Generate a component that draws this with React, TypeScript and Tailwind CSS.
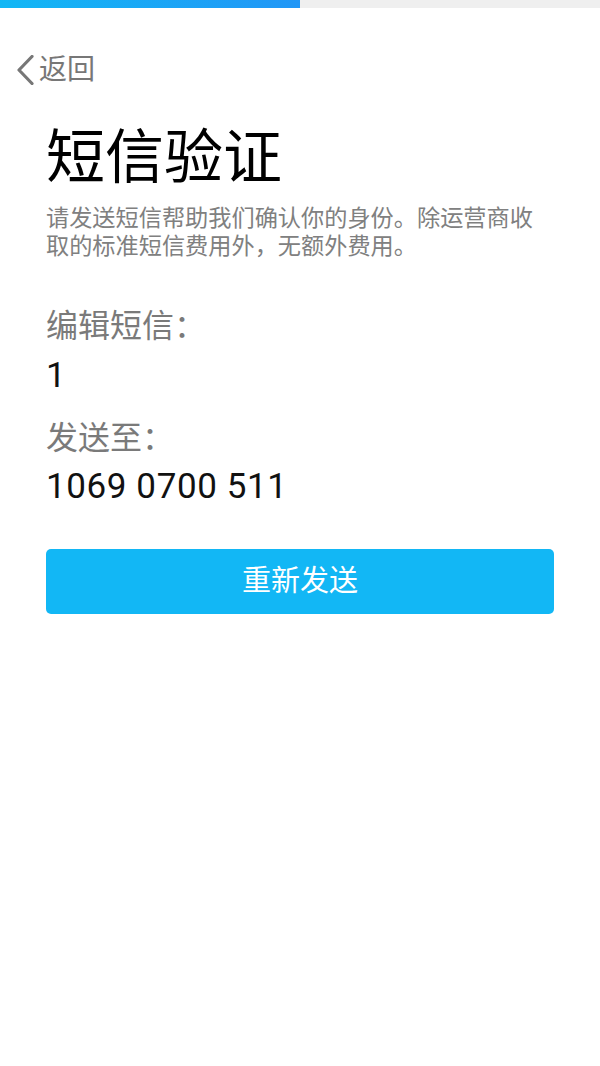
export default function App() {
  return (
    <div className="w-[600px] min-h-[1066px] bg-white font-['Roboto','Noto_Sans_CJK_SC',sans-serif]">
      {/* progress */}
      <div className="flex h-[8px] w-full bg-[#efefef]">
        <div className="h-full w-[300px] bg-gradient-to-r from-[#12b7f5] to-[#2196f6]" />
      </div>

      {/* back */}
      <div className="mt-[48px] flex h-[28px] items-center pl-[16px]">
        <svg width="18" height="30" viewBox="0 0 18 30" fill="none">
          <path
            d="M16 1.5L3 15L16 28.5"
            stroke="#777777"
            strokeWidth="3.2"
            strokeLinecap="round"
            strokeLinejoin="round"
          />
        </svg>
        <span className="ml-[5px] text-[28px] leading-[28px] text-[#777777]">返回</span>
      </div>

      <div className="px-[46px]">
        <h1 className="mt-[45px] text-[59px] font-normal leading-[58px] text-black">短信验证</h1>
        <p className="mt-[17px] pr-[4px] text-[23.2px] leading-[28px] text-[#808080]">
          请发送短信帮助我们确认你的身份。除运营商收取的标准短信费用外，无额外费用。
        </p>

        <div className="mt-[46px] text-[32px] leading-[40px] text-[#7a7a7a]">编辑短信：</div>
        <div className="mt-[10px] text-[35px] leading-[40px] tracking-[0.6px] text-[#111111]">1</div>

        <div className="mt-[22px] text-[32px] leading-[40px] text-[#7a7a7a]">发送至：</div>
        <div className="mt-[9px] text-[35px] leading-[40px] tracking-[0.6px] text-[#111111]">
          1069 0700 511
        </div>

        <button className="mt-[42px] flex h-[65px] w-full items-center justify-center rounded-[5px] bg-[#12b7f5] text-[29px] text-white">
          重新发送
        </button>
      </div>
    </div>
  );
}
